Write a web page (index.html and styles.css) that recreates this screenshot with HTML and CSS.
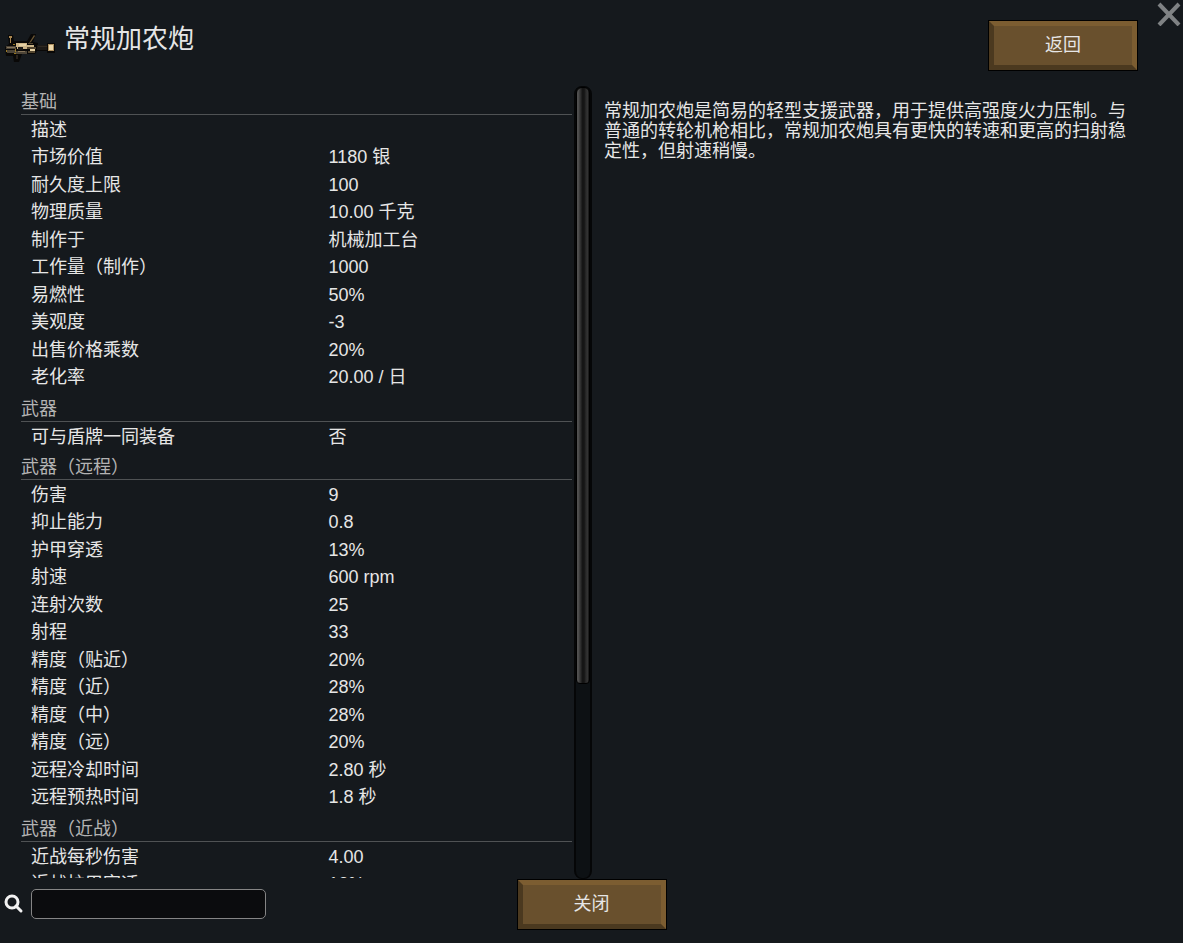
FILE: index.html
```html
<!DOCTYPE html>
<html lang="zh-CN">
<head>
<meta charset="utf-8">
<title>常规加农炮</title>
<link rel="stylesheet" href="styles.css">
</head>
<body>
<header class="header">
  <svg class="item-icon" viewBox="5 31 50 32" aria-hidden="true">
    <path fill="#090807" d="M8 35h5l1 6h13l4-7h5l-3 8 5 1v2h9v-2h8v10h-8v-2H37l-2 3H22l-3 8h-5l-1-6H6l-1-9 4-3z"/>
    <path fill="#a8854f" d="M9 36h3v2h-1v5h-1v-5H9z"/>
    <path fill="#6b5736" d="m34 35 1 1-4 6-2 1z"/>
    <path fill="#4c4437" d="M6 46h10v3H6zM7 50h9v3H7zM16 51h11v3H16z"/>
    <path fill="#85745a" d="M7 47h8v1H7zM18 51h7v1h-7z"/>
    <path fill="#cbb488" d="M16 43h11v2h7v2h-7v2H17v-2h-1z"/>
    <path fill="#e6d1a5" d="M19 44h7v2h-7zM30 49h5v2h-5z"/>
    <path fill="#52452f" d="M28 43h5v1h-5zM27 47h9v2h-9zM28 51h7v2h-7z"/>
    <path fill="#1d1a17" d="M37 45h10v5H37zM18 47h5v3h-5z"/>
    <path fill="#302a22" d="M38 46h9v1h-9z"/>
    <path fill="#ad9060" d="M48 44h6v7h-6z"/>
    <path fill="#edd9ae" d="M49 45h4v5h-4z"/>
    <path fill="#9a7a24" d="M13 44h2v1h-2zM15 49h1v3h-1zM14 53h2v1h-2zM6 50h1v2H6z"/>
    <path fill="#28211a" d="M16 55h2v4h-2z"/>
  </svg>
  <h1 class="title">常规加农炮</h1>
  <button class="button" type="button">返回</button>
  <button class="close" type="button" aria-label="关闭窗口">
    <svg viewBox="0 0 24 24" aria-hidden="true"><path d="M2 2 22 23M22 2 2 23"/></svg>
  </button>
</header>
<main class="content">
  <div class="list">
    <div class="viewport">
      <table class="stats">
        <tbody>
          <tr class="section"><th colspan="2" scope="rowgroup">基础</th></tr>
          <tr><th scope="row">描述</th><td></td></tr>
          <tr><th scope="row">市场价值</th><td>1180 银</td></tr>
          <tr><th scope="row">耐久度上限</th><td>100</td></tr>
          <tr><th scope="row">物理质量</th><td>10.00 千克</td></tr>
          <tr><th scope="row">制作于</th><td>机械加工台</td></tr>
          <tr><th scope="row">工作量（制作）</th><td>1000</td></tr>
          <tr><th scope="row">易燃性</th><td>50%</td></tr>
          <tr><th scope="row">美观度</th><td>-3</td></tr>
          <tr><th scope="row">出售价格乘数</th><td>20%</td></tr>
          <tr><th scope="row">老化率</th><td>20.00 / 日</td></tr>
        </tbody>
        <tbody>
          <tr class="section"><th colspan="2" scope="rowgroup">武器</th></tr>
          <tr><th scope="row">可与盾牌一同装备</th><td>否</td></tr>
        </tbody>
        <tbody>
          <tr class="section"><th colspan="2" scope="rowgroup">武器（远程）</th></tr>
          <tr><th scope="row">伤害</th><td>9</td></tr>
          <tr><th scope="row">抑止能力</th><td>0.8</td></tr>
          <tr><th scope="row">护甲穿透</th><td>13%</td></tr>
          <tr><th scope="row">射速</th><td>600 rpm</td></tr>
          <tr><th scope="row">连射次数</th><td>25</td></tr>
          <tr><th scope="row">射程</th><td>33</td></tr>
          <tr><th scope="row">精度（贴近）</th><td>20%</td></tr>
          <tr><th scope="row">精度（近）</th><td>28%</td></tr>
          <tr><th scope="row">精度（中）</th><td>28%</td></tr>
          <tr><th scope="row">精度（远）</th><td>20%</td></tr>
          <tr><th scope="row">远程冷却时间</th><td>2.80 秒</td></tr>
          <tr><th scope="row">远程预热时间</th><td>1.8 秒</td></tr>
        </tbody>
        <tbody>
          <tr class="section"><th colspan="2" scope="rowgroup">武器（近战）</th></tr>
          <tr><th scope="row">近战每秒伤害</th><td>4.00</td></tr>
          <tr><th scope="row">近战护甲穿透</th><td>13%</td></tr>
        </tbody>
      </table>
    </div>
    <div class="track"><div class="thumb"></div></div>
  </div>
  <p class="description">常规加农炮是简易的轻型支援武器，用于提供高强度火力压制。与普通的转轮机枪相比，常规加农炮具有更快的转速和更高的扫射稳定性，但射速稍慢。</p>
</main>
<footer class="footer">
  <label class="search">
    <svg viewBox="0 0 20 20" role="img" aria-label="搜索"><circle cx="8" cy="8" r="6"/><path d="m12 12 5 5"/></svg>
    <input type="text">
  </label>
  <button class="button" type="button">关闭</button>
</footer>
</body>
</html>
```

FILE: styles.css
```css
* { box-sizing: border-box; }

body {
  margin: 0;
  height: 100vh;
  display: flex;
  flex-direction: column;
  overflow: hidden;
  background: #15191d;
  color: #e6e6e6;
  font: 18px/20px "Liberation Sans", "Noto Sans CJK SC", sans-serif;
}

.header {
  position: relative;
  display: flex;
  align-items: flex-start;
  padding: 20px 45px 0 5px;
  height: 84px;
}

.item-icon {
  width: 50px;
  height: 32px;
  margin-top: 11px;
}

.title {
  flex: 1;
  margin: 0 0 0 9px;
  font-size: 26px;
  line-height: 38px;
  font-weight: 400;
}

.button {
  width: 148px;
  height: 49px;
  margin: 1px;
  padding: 0 0 2px;
  border: 5px solid;
  border-color: #7c5d31 #7c5d31 #4b391f #4b391f;
  outline: 1px solid #000;
  background: #69502d;
  color: #e6e6e6;
  font: inherit;
}

.close {
  position: absolute;
  top: 2px;
  right: 2px;
  width: 24px;
  height: 24px;
  padding: 0;
  border: 0;
  background: none;
}

.close svg {
  display: block;
  fill: none;
  stroke: #7f8284;
  stroke-width: 4;
}

.content {
  flex: 1;
  min-height: 0;
  display: grid;
  grid-template-columns: 571fr 533fr;
  grid-template-rows: minmax(0, 1fr);
  column-gap: 12px;
  padding: 0 46px 0 21px;
}

.list {
  display: flex;
  gap: 2px;
}

.viewport {
  flex: 1;
  margin-bottom: 1px;
  overflow: hidden;
}

.stats {
  width: 100%;
  table-layout: fixed;
  border-spacing: 0;
}

.stats th,
.stats td {
  height: 28px;
  padding: 2px 0 0;
  text-align: left;
  font-weight: 400;
  white-space: nowrap;
}

.stats tr:nth-child(even) > * { height: 27px; }

.stats th { padding-left: 10px; }

.stats td { padding-left: 32px; }

.stats .section th {
  height: 32px;
  padding: 6px 0 0;
  border-bottom: 1px solid #4f5254;
  color: #b3b3b3;
}

.stats tbody:nth-child(odd) .section th {
  height: 31px;
}

.track {
  width: 18px;
  margin-top: 2px;
  border: 1px solid #050607;
  border-width: 1px 2px;
  border-radius: 8px;
  background: #0d1114;
}

.thumb {
  height: 75.5%;
  border: 1px solid #000;
  border-radius: 6px 6px 4px 4px;
  background: linear-gradient(90deg, #505050 0 10%, #363636 25%, #151515 45%, #151515 60%, #2b2b2b 75%, #333 88%, #111);
}

.description {
  margin: 17px 0 0;
}

.footer {
  display: grid;
  grid-template-columns: 1fr auto 1fr;
  height: 64px;
}

.search {
  display: flex;
  align-items: flex-start;
  gap: 7px;
  padding: 10px 0 0 4px;
}

.search svg {
  width: 20px;
  height: 20px;
  margin-top: 5px;
  fill: none;
  stroke: #f2f2f2;
  stroke-width: 3;
  stroke-linecap: round;
}

.search input {
  width: 235px;
  height: 30px;
  padding: 0 8px;
  border: 1px solid #858585;
  border-radius: 5px;
  background: #0b0c0e;
  color: inherit;
  font: inherit;
}
```
